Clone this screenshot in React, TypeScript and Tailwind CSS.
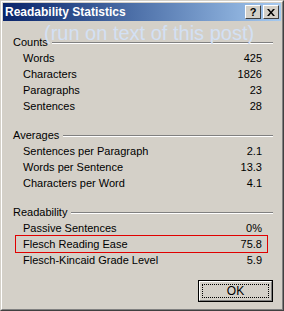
import React from "react";

const sections = [
  {
    title: "Counts",
    rows: [
      { label: "Words", value: "425" },
      { label: "Characters", value: "1826" },
      { label: "Paragraphs", value: "23" },
      { label: "Sentences", value: "28" },
    ],
  },
  {
    title: "Averages",
    rows: [
      { label: "Sentences per Paragraph", value: "2.1" },
      { label: "Words per Sentence", value: "13.3" },
      { label: "Characters per Word", value: "4.1" },
    ],
  },
  {
    title: "Readability",
    rows: [
      { label: "Passive Sentences", value: "0%" },
      { label: "Flesch Reading Ease", value: "75.8", marked: true },
      { label: "Flesch-Kincaid Grade Level", value: "5.9" },
    ],
  },
];

const font = { fontFamily: '"Liberation Sans", Arial, sans-serif' };

export default function App() {
  return (
    <div
      className="w-[284px] h-[311px] bg-[#d4d0c8] text-black text-[11px] border-t border-l border-t-[#d4d0c8] border-l-[#d4d0c8] border-r border-b border-r-[#404040] border-b-[#404040]"
      style={font}
    >
      <div className="h-full border-t border-l border-t-white border-l-white border-r border-b border-r-[#808080] border-b-[#808080] p-px relative">
        {/* title bar */}
        <div className="h-[18px] flex items-center justify-between bg-gradient-to-r from-[#0a246a] to-[#a6caf0] pl-[2px] pr-[2px]">
          <span className="text-white font-bold text-[12px] leading-none">
            Readability Statistics
          </span>
          <div className="flex gap-[2px]">
            <div className="w-[16px] h-[14px] bg-[#d4d0c8] border border-t-white border-l-white border-r-[#404040] border-b-[#404040] flex items-center justify-center font-bold text-[11px] leading-none">
              ?
            </div>
            <div className="w-[16px] h-[14px] bg-[#d4d0c8] border border-t-white border-l-white border-r-[#404040] border-b-[#404040] flex items-center justify-center">
              <svg width="8" height="7" viewBox="0 0 8 7">
                <path d="M0 0h2l2 2.5L6 0h2L5 3.5 8 7H6L4 4.5 2 7H0l3-3.5z" fill="#000" />
              </svg>
            </div>
          </div>
        </div>

        {/* watermark note */}
        <div className="absolute left-[42px] top-[20px] text-[20px] leading-[22px] text-[#d3e0f4] pointer-events-none">
          (run on text of this post)
        </div>

        <div className="pl-[10px] pr-[8px] pt-[13px]">
          {sections.map((s, i) => (
            <div key={s.title} className={i > 0 ? "mt-[13px]" : ""}>
              <div className="h-[16px] flex items-center gap-[4px]">
                <span>{s.title}</span>
                <div className="flex-1 h-[2px] border-t border-t-[#808080] border-b border-b-white mt-px" />
              </div>
              {s.rows.map((r) =>
                r.marked ? (
                  <div
                    key={r.label}
                    className="h-[18px] -my-px ml-[2px] mr-[5px] border border-[#e00000] flex items-center justify-between pl-[7px] pr-[5px]"
                  >
                    <span>{r.label}</span>
                    <span>{r.value}</span>
                  </div>
                ) : (
                  <div
                    key={r.label}
                    className="h-[16px] flex items-center justify-between pl-[10px] pr-[11px]"
                  >
                    <span>{r.label}</span>
                    <span>{r.value}</span>
                  </div>
                ),
              )}
            </div>
          ))}
          <div className="flex justify-end mt-[12px]">
            <div className="w-[75px] h-[22px] border border-black bg-[#d4d0c8]">
              <div className="h-full border border-t-white border-l-white border-r-[#808080] border-b-[#808080] p-[2px]">
                <div className="h-full border border-dotted border-black flex items-center justify-center text-[12px]">
                  OK
                </div>
              </div>
            </div>
          </div>
        </div>
      </div>
    </div>
  );
}
